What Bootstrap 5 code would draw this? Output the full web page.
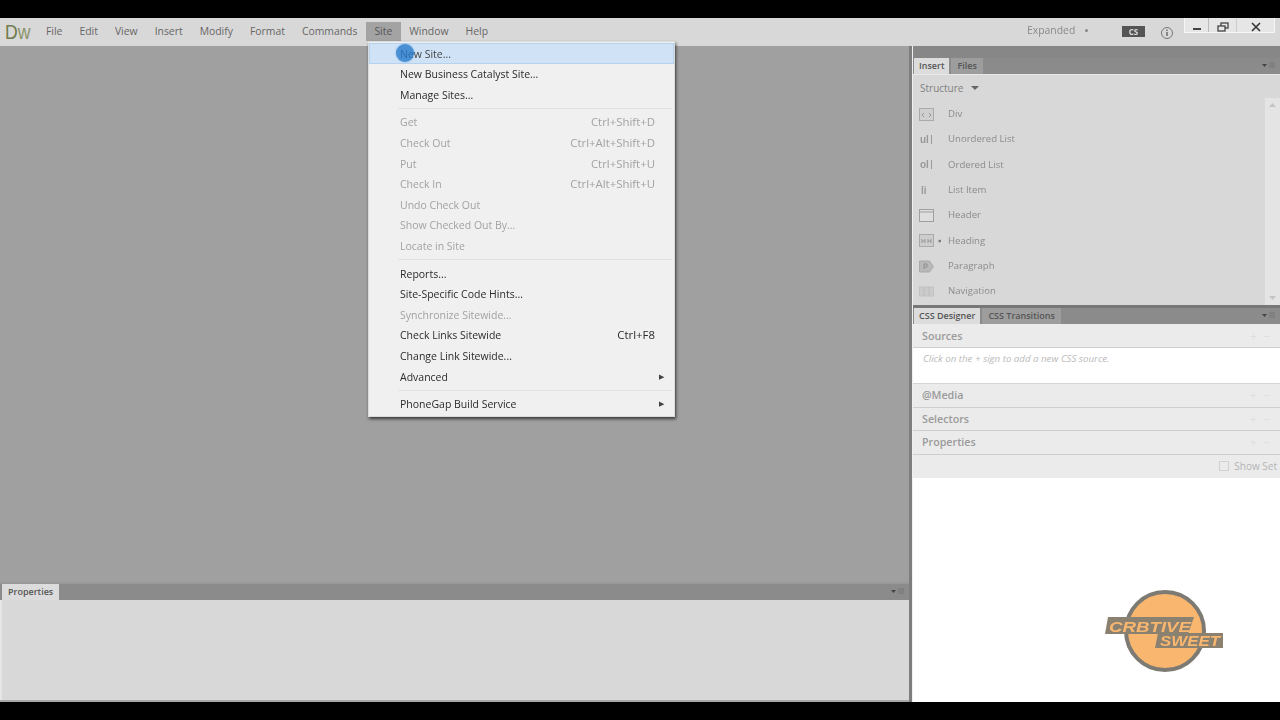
<!DOCTYPE html>
<html lang="en">
<head>
  <meta charset="UTF-8">
  <title>Dreamweaver Site Menu</title>
  <link href="https://cdn.jsdelivr.net/npm/bootstrap@5.3.3/dist/css/bootstrap.min.css" rel="stylesheet">
  <style>
    html, body { height: 720px; overflow: hidden; background: #000; }
    body { font-family: "Open Sans", "Liberation Sans", sans-serif; font-size: 10.5px; position: relative; }
    .app { height: 720px; padding: 18px 0; filter: blur(.45px); }
    .menubar { height: 28px; background: #d8d8d8; color: #666; flex: none; font-size: 10.4px; }
    .logo { width: 37.5px; padding-left: 5px; font: 20px/28px "Liberation Sans", sans-serif; color: #6f7a4c; }
    .logo b { display: inline-block; font-weight: 400; transform: scaleX(.88); transform-origin: left center; }
    .logo span { color: #8a9368; }
    .menubar .m { padding: 0 8.5px; line-height: 27px; }
    .menubar .m.on { background: #a3a3a3; height: 19px; line-height: 19px; margin-top: 4px; color: #555; }
    .bar-right { position: relative; margin-left: auto; width: 253px; }
    .workspace { position: absolute; left: 0; top: 5px; color: #8a8a8a; }
    .caret-s { display: inline-block; width: 3px; height: 3px; background: #888; margin-left: 10px; vertical-align: 2px; border-radius: 50%; }
    .cs-box { position: absolute; left: 95px; top: 8px; width: 23px; height: 11px; background: #555; color: #ddd; font-size: 8px; line-height: 11px; text-align: center; font-weight: 700; }
    .info { position: absolute; left: 133px; top: 8px; }
    .winbtns { position: absolute; left: 157px; top: 0; width: 91px; height: 15px; background: #e6e6e6; border: 1px solid #f6f6f6; border-top: 0; }
    .winbtns > div { height: 14px; padding-top: 3px; }
    .w1 { width: 24px; border-right: 1px solid #bbb; }
    .w2 { width: 28px; border-right: 1px solid #ccc; }
    .w3 { flex: 1; }

    .main { min-height: 0; }
    .left { width: 909px; flex: none; }
    .doc { background: #a0a0a0; }
    .tabbar { height: 16px; background: #8b8b8b; flex: none; }
    .tab { height: 16px; color: #444; font-weight: 600; font-size: 9px; line-height: 16px; padding: 0 5px; }
    .tab.active { background: #dcdcdc; color: #555; margin-left: 1px; }
    .tab.idle { background: #9d9d9d; color: #555; margin-left: 2px; padding: 0 6px; }
    .panel-menu { margin-left: auto; margin-right: 4px; margin-top: 4px; }
    .props-top { height: 2px; background: #999; }
    .props-body { height: 100px; background: #d8d8d8; border-left: 2px solid #e6e6e6; }
    .tab.active.props-tab { margin-left: 2px; width: 57px; padding-left: 6px; }
    .foot { height: 2px; background: #a8a8a8; flex: none; }
    .splitter { width: 4px; flex: none; background: #7d7d7d; border-right: 1px solid #efefef; }
    .right { min-width: 0; background: #fff; position: relative; }
    .strip { height: 12px; background: #878787; flex: none; }
    .insert { height: 231px; background: #d8d8d8; flex: none; position: relative; border-top: 1px solid #e8e8e8; }
    .structure { height: 26.500px; padding: 7px 0 0 7px; color: #808080; font-size: 10px; line-height: 13px; }
    .tri { display: inline-block; border: 4px solid transparent; border-top: 4px solid #666; border-bottom: 0; margin-left: 8px; vertical-align: 2px; }
    .ins-list { padding: 0 15px 0 6px; }
    .ins-item { height: 25.35px; color: #8c8c8c; font-size: 9.6px; }
    .ins-item svg { width: 15px; height: 13px; flex: none; }
    .ins-item .lbl { margin-left: 14px; }
    .ins-item .lbl.h { margin-left: 4px; }
    .ins-item .dash { width: 6px; margin-left: 4px; color: #777; }
    .scroll { position: absolute; right: 0; top: 23px; bottom: 0; width: 15px; background: #e4e4e4; padding: 5px 4px; }
    .split-h { height: 3px; background: #777; flex: none; }
    .sec { height: 23.5px; background: #ebebeb; border-bottom: 1px solid #cfcfcf; color: #9a9a9a; font-weight: 600; font-size: 10.7px; line-height: 23px; padding-left: 9px; flex: none; }
    .sec.first { height: 24px; line-height: 25px; }
    .sec .ctl { margin-left: auto; margin-right: 10px; color: #dedede; font-size: 12px; font-weight: 400; }
    .hint { height: 36px; background: #fff; color: #b9b9b9; font-style: italic; font-size: 9.7px; padding: 4px 0 0 10px; flex: none; border-bottom: 1px solid #d4d4d4; }
    .showset { height: 23px; background: #ebebeb; color: #b4b4b4; font-size: 10px; flex: none; padding-right: 3px; }
    .showset i { width: 10px; height: 10px; border: 1px solid #d0d0d0; margin-right: 5px; display: block; }

    .site-menu { position: absolute; display: block; left: 368px; top: 41px; width: 307px; min-width: 0; padding: 1.4px 0 1.6px; margin: 0; background: #f0f0f0; border: 1px solid #dcdcdc; border-radius: 0; box-shadow: 1px 2px 3px rgba(0,0,0,.65); font-size: 10.5px; --bs-dropdown-font-size: 10.5px; filter: blur(.35px); }
    .site-menu .dropdown-item { height: 20.6px; padding: 0 19px 0 31px; line-height: 20px; color: #2b2b2b; font-size: 10.5px; display: flex; justify-content: space-between; align-items: center; background: none; }
    .site-menu .dropdown-item.disabled { color: #a2a2a2; }
    .site-menu .dropdown-item.active { background: #cfe2f6; border: 1px solid #b5d2ef; color: #444; padding-left: 30px; }
    .site-menu .dropdown-divider { margin: 3px 2px 3px 29px; border-color: #e2e2e2; opacity: 1; height: 0; }
    .site-menu .sub { color: #444; font-size: 7px; margin-right: -9px; }
    .site-menu .sc { color: inherit; font-size: 11.4px; }
    .click-dot { position: absolute; z-index: 1001; left: 396px; top: 44px; width: 18px; height: 18px; border-radius: 50%; background: rgba(38,122,203,.8); box-shadow: 0 0 2px rgba(38,122,203,.6); }
    .brand { position: absolute; left: 1104px; top: 588px; width: 122px; height: 86px; filter: blur(.5px); }
  </style>
</head>
<body>
<div class="app d-flex flex-column">
  <div class="menubar d-flex">
    <div class="logo"><b>D<span>w</span></b></div>
    <div class="m">File</div>
    <div class="m">Edit</div>
    <div class="m">View</div>
    <div class="m">Insert</div>
    <div class="m">Modify</div>
    <div class="m">Format</div>
    <div class="m">Commands</div>
    <div class="m on">Site</div>
    <div class="m">Window</div>
    <div class="m">Help</div>
    <div class="bar-right">
      <div class="workspace">Expanded<span class="caret-s"></span></div>
      <div class="cs-box">CS</div>
      <svg class="info" width="14" height="14" viewBox="0 0 14 14"><circle cx="7" cy="7" r="5.5" fill="none" stroke="#777"/><rect x="6.3" y="6" width="1.4" height="4" fill="#666"/><rect x="6.3" y="3.6" width="1.4" height="1.4" fill="#666"/></svg>
      <div class="winbtns d-flex">
        <div class="w1 d-flex align-items-center justify-content-center"><svg width="10" height="10" viewBox="0 0 10 10"><rect x="1" y="6" width="8" height="2" fill="#444"/></svg></div>
        <div class="w2 d-flex align-items-center justify-content-center"><svg width="12" height="10" viewBox="0 0 12 10"><rect x="4" y="1" width="7" height="5" fill="none" stroke="#444" stroke-width="1.3"/><rect x="1" y="4" width="7" height="5" fill="#e6e6e6" stroke="#444" stroke-width="1.3"/></svg></div>
        <div class="w3 d-flex align-items-center justify-content-center"><svg width="10" height="10" viewBox="0 0 10 10"><path d="M1 1L9 9M9 1L1 9" stroke="#333" stroke-width="1.6"/></svg></div>
      </div>
    </div>
  </div>

  <div class="main d-flex flex-grow-1">
    <div class="left d-flex flex-column">
      <div class="doc flex-grow-1"></div>
      <div class="props-top"></div>
      <div class="tabbar d-flex">
        <div class="tab active props-tab">Properties</div>
        <svg class="panel-menu" width="14" height="8" viewBox="0 0 14 8"><path d="M0 2h5L2.500 5z" fill="#444"/><path d="M7 1h6M7 3h6M7 5h6" stroke="#777"/></svg>
      </div>
      <div class="props-body flex-grow-0"></div>
      <div class="foot"></div>
    </div>
    <div class="splitter"></div>
    <div class="right flex-grow-1 d-flex flex-column">
      <div class="strip"></div>
      <div class="tabbar d-flex">
        <div class="tab active">Insert</div>
        <div class="tab idle">Files</div>
        <svg class="panel-menu" width="14" height="8" viewBox="0 0 14 8"><path d="M0 2h5L2.500 5z" fill="#444"/><path d="M7 1h6M7 3h6M7 5h6" stroke="#777"/></svg>
      </div>
      <div class="insert">
        <div class="structure">Structure<span class="tri"></span></div>
        <div class="ins-list">
          <div class="ins-item d-flex align-items-center"><svg viewBox="0 0 15 13"><rect x=".5" y=".5" width="14" height="12" fill="#d0d0d0" stroke="#aaa"/><path d="M5 5L3 7l2 2M10 5l2 2-2 2" fill="none" stroke="#999"/></svg><span class="lbl">Div</span></div>
          <div class="ins-item d-flex align-items-center"><svg viewBox="0 0 15 13"><text x="1" y="10" font-size="10" font-weight="700" fill="#999" font-family="Liberation Sans">ul</text><path d="M12.500 2v9" stroke="#999"/></svg><span class="lbl">Unordered List</span></div>
          <div class="ins-item d-flex align-items-center"><svg viewBox="0 0 15 13"><text x="1" y="10" font-size="10" font-weight="700" fill="#999" font-family="Liberation Sans">ol</text><path d="M12.500 2v9" stroke="#999"/></svg><span class="lbl">Ordered List</span></div>
          <div class="ins-item d-flex align-items-center"><svg viewBox="0 0 15 13"><text x="2" y="10" font-size="10" font-weight="700" fill="#999" font-family="Liberation Sans">li</text></svg><span class="lbl">List Item</span></div>
          <div class="ins-item d-flex align-items-center"><svg viewBox="0 0 15 13"><rect x=".5" y=".5" width="14" height="12" fill="#dedede" stroke="#9f9f9f"/><path d="M1 3h13" stroke="#9f9f9f"/></svg><span class="lbl">Header</span></div>
          <div class="ins-item d-flex align-items-center"><svg viewBox="0 0 15 13"><rect x=".5" y=".5" width="14" height="12" fill="#cdcdcd" stroke="#aaa"/><path d="M3 5v4M6 5v4M3 7h3M9 5v4M12 5v4M9 7h3" stroke="#999"/></svg><span class="dash">▪</span><span class="lbl h">Heading</span></div>
          <div class="ins-item d-flex align-items-center"><svg viewBox="0 0 15 13"><path d="M.5 1h10l4 5.500-4 5.500H.5z" fill="#b8b8b8" stroke="#aaa"/><path d="M5 9V4h3v3H5" fill="none" stroke="#8f8f8f"/></svg><span class="lbl">Paragraph</span></div>
          <div class="ins-item d-flex align-items-center"><svg viewBox="0 0 15 13"><rect x=".5" y="2" width="14" height="9" fill="#cbcbcb" stroke="#c2c2c2"/><path d="M5 2v9M10 2v9" stroke="#bcbcbc"/></svg><span class="lbl">Navigation</span></div>
        </div>
        <div class="scroll d-flex flex-column justify-content-between">
          <svg width="7" height="4" viewBox="0 0 7 4"><path d="M0 4l3.500-4 3.500 4z" fill="#c4c4c4"/></svg>
          <svg width="7" height="4" viewBox="0 0 7 4"><path d="M0 0l3.500 4 3.500-4z" fill="#c4c4c4"/></svg>
        </div>
      </div>
      <div class="split-h"></div>
      <div class="tabbar d-flex">
        <div class="tab active">CSS Designer</div>
        <div class="tab idle">CSS Transitions</div>
        <svg class="panel-menu" width="14" height="8" viewBox="0 0 14 8"><path d="M0 2h5L2.500 5z" fill="#444"/><path d="M7 1h6M7 3h6M7 5h6" stroke="#777"/></svg>
      </div>
      <div class="sec first d-flex">Sources<span class="ctl">+ &nbsp;−</span></div>
      <div class="hint">Click on the + sign to add a new CSS source.</div>
      <div class="sec d-flex">@Media<span class="ctl">+ &nbsp;−</span></div>
      <div class="sec d-flex">Selectors<span class="ctl">+ &nbsp;−</span></div>
      <div class="sec d-flex">Properties<span class="ctl">+ &nbsp;−</span></div>
      <div class="showset d-flex align-items-center justify-content-end"><i></i>Show Set</div>
    </div>
  </div>
</div>

<ul class="dropdown-menu site-menu list-unstyled">
  <li><a class="dropdown-item active" href="#">New Site...</a></li>
  <li><a class="dropdown-item" href="#">New Business Catalyst Site...</a></li>
  <li><a class="dropdown-item" href="#">Manage Sites...</a></li>
  <li><hr class="dropdown-divider"></li>
  <li><a class="dropdown-item disabled" href="#">Get<span class="sc">Ctrl+Shift+D</span></a></li>
  <li><a class="dropdown-item disabled" href="#">Check Out<span class="sc">Ctrl+Alt+Shift+D</span></a></li>
  <li><a class="dropdown-item disabled" href="#">Put<span class="sc">Ctrl+Shift+U</span></a></li>
  <li><a class="dropdown-item disabled" href="#">Check In<span class="sc">Ctrl+Alt+Shift+U</span></a></li>
  <li><a class="dropdown-item disabled" href="#">Undo Check Out</a></li>
  <li><a class="dropdown-item disabled" href="#">Show Checked Out By...</a></li>
  <li><a class="dropdown-item disabled" href="#">Locate in Site</a></li>
  <li><hr class="dropdown-divider"></li>
  <li><a class="dropdown-item" href="#">Reports...</a></li>
  <li><a class="dropdown-item" href="#">Site-Specific Code Hints...</a></li>
  <li><a class="dropdown-item disabled" href="#">Synchronize Sitewide...</a></li>
  <li><a class="dropdown-item" href="#">Check Links Sitewide<span class="sc">Ctrl+F8</span></a></li>
  <li><a class="dropdown-item" href="#">Change Link Sitewide...</a></li>
  <li><a class="dropdown-item" href="#">Advanced<span class="sub">▶</span></a></li>
  <li><hr class="dropdown-divider"></li>
  <li><a class="dropdown-item" href="#">PhoneGap Build Service<span class="sub">▶</span></a></li>
</ul>
<div class="click-dot"></div>

<svg class="brand" viewBox="0 0 122 86">
  <circle cx="61" cy="43" r="39" fill="#f9b66f" stroke="#7d7a74" stroke-width="4"/>
  <path d="M4 29H90L84 46H1z" fill="#8a8171"/>
  <path d="M54 45H119V60H51z" fill="#8a8171"/>
  <text x="5" y="44" font-family="Liberation Sans" font-weight="700" font-style="italic" font-size="15" fill="#f9b66f" textLength="82" lengthAdjust="spacingAndGlyphs">CRBTIVE</text>
  <text x="56" y="58" font-family="Liberation Sans" font-weight="700" font-style="italic" font-size="14" fill="#f9b66f" textLength="60" lengthAdjust="spacingAndGlyphs">SWEET</text>
</svg>
</body>
</html>
